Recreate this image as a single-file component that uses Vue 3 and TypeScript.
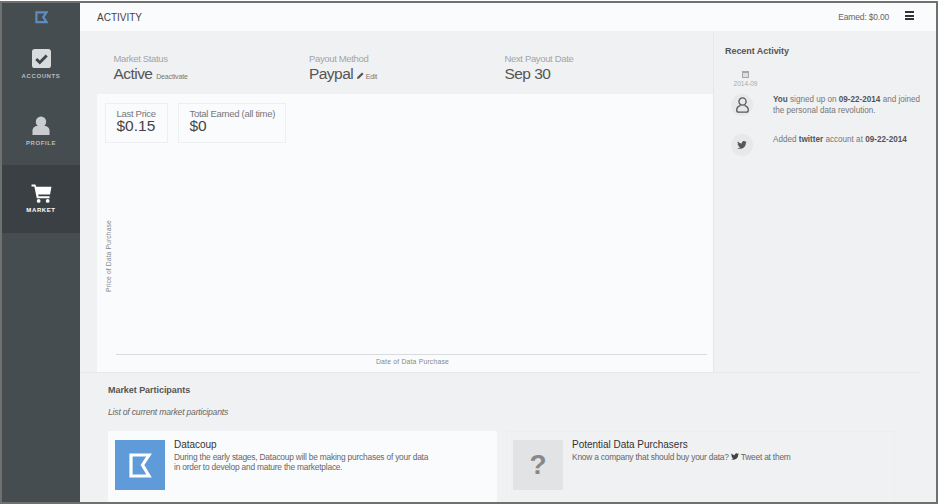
<template>
  <div class="frame">
    <aside class="sidebar">
      <div class="brand">
        <svg width="13" height="13" viewBox="0 0 14 14"><path d="M1.500 1.500h11l-3.600 5 3.600 5.500h-11z" fill="none" stroke="#5b8dc2" stroke-width="2.400" /></svg>
      </div>
      <a class="nav-item">
        <svg width="19" height="19" viewBox="0 0 20 20">
          <rect width="20" height="20" rx="3" fill="#d9dcdd" />
          <path d="M4.500 10.500l3.700 3.700 7.300-7.400" fill="none" stroke="#3f4649" stroke-width="3" />
        </svg>
        <span>ACCOUNTS</span>
      </a>
      <a class="nav-item">
        <svg width="18" height="19" viewBox="0 0 19 20" fill="#c9cdcf">
          <circle cx="9.500" cy="6" r="5.500" />
          <path d="M0.500 20v-4.500c0-3 2.500-5 5-5h8c2.500 0 5 2 5 5V20z" />
        </svg>
        <span>PROFILE</span>
      </a>
      <a class="nav-item active">
        <svg class="cart" width="21" height="19" viewBox="0 0 21 20" fill="#fff">
          <path d="M0 0.500h4l1 2.500h16l-1.500 8H7l.4 2H19v2H5.500L3 2.500H0z" />
          <circle cx="7.500" cy="17.800" r="2" />
          <circle cx="17" cy="17.800" r="2" />
        </svg>
        <span>MARKET</span>
      </a>
    </aside>

    <div class="page">
      <header class="topbar">
        <h1>ACTIVITY</h1>
        <div class="earned">Earned: $0.00</div>
        <div class="burger"><i></i><i></i><i></i></div>
      </header>

      <div class="columns">
        <main class="left">
          <section class="stats">
            <div class="stat" v-for="s in stats" :key="s.label">
              <div class="stat-label">{{ s.label }}</div>
              <div class="stat-value">
                {{ s.value }}
                <small v-if="s.note">
                  <svg v-if="s.pencil" width="7" height="7" viewBox="0 0 7 7"><path d="M0 7l.4-2L5 .4 6.600 2 2 6.600z" fill="#555" /></svg>
                  {{ s.note }}
                </small>
              </div>
            </div>
          </section>

          <section class="chart">
            <div class="tiles">
              <div class="tile">
                <div class="tile-label">Last Price</div>
                <div class="tile-value">$0.15</div>
              </div>
              <div class="tile wide">
                <div class="tile-label">Total Earned (all time)</div>
                <div class="tile-value">$0</div>
              </div>
            </div>
            <div class="plot">
              <div class="y-label">Price of Data Purchase</div>
              <div class="x-axis">
                <div class="axis-line"></div>
                <div class="x-label">Date of Data Purchase</div>
              </div>
            </div>
          </section>
        </main>

        <aside class="recent">
          <h2>Recent Activity</h2>
          <div class="month">
            <svg width="7" height="8" viewBox="0 0 7 8"><path d="M0 1h7v7H0z" fill="#a5a7a9" /><path d="M1 3h5v4H1z" fill="#dcdee0" /></svg>
            <span>2014-09</span>
          </div>
          <div class="event">
            <div class="bubble">
              <svg width="13" height="16" viewBox="0 0 13 16" fill="none" stroke="#55595c" stroke-width="1.300">
                <circle cx="6.500" cy="4.500" r="3.600" />
                <path d="M4.500 8.300C2 9.200.7 11 .7 13c0 1.300.8 2.200 2 2.200h7.600c1.200 0 2-.9 2-2.200 0-2-1.300-3.800-3.800-4.700" />
              </svg>
            </div>
            <p><b>You</b> signed up on <b>09-22-2014</b> and joined the personal data revolution.</p>
          </div>
          <div class="event">
            <div class="bubble">
              <svg width="10" height="8" viewBox="0 0 24 20"><path :d="twitter" fill="#55595c" /></svg>
            </div>
            <p>Added <b>twitter</b> account at <b>09-22-2014</b></p>
          </div>
        </aside>
      </div>

      <section class="market">
        <h2>Market Participants</h2>
        <p class="intro">List of current market participants</p>
        <div class="cards">
          <article class="card primary">
            <div class="thumb blue">
              <svg width="23" height="25" viewBox="0 0 23 25"><path d="M2 2h18l-6.500 10L20 23H2z" fill="none" stroke="#fff" stroke-width="3.200" /></svg>
            </div>
            <div>
              <h3>Datacoup</h3>
              <p>During the early stages, Datacoup will be making purchases of your data<br />in order to develop and mature the marketplace.</p>
            </div>
          </article>
          <article class="card">
            <div class="thumb grey">?</div>
            <div>
              <h3>Potential Data Purchasers</h3>
              <p>
                Know a company that should buy your data?
                <svg width="8" height="7" viewBox="0 0 24 20"><path :d="twitter" fill="#444" /></svg>
                Tweet at them
              </p>
            </div>
          </article>
        </div>
      </section>
    </div>
  </div>
</template>

<script setup lang="ts">
interface Stat {
  label: string
  value: string
  note?: string
  pencil?: boolean
}

const stats: Stat[] = [
  { label: 'Market Status', value: 'Active', note: 'Deactivate' },
  { label: 'Payout Method', value: 'Paypal', note: 'Edit', pencil: true },
  { label: 'Next Payout Date', value: 'Sep 30' },
]

const twitter =
  'M24 2.400a9.800 9.800 0 0 1-2.800.8A4.900 4.900 0 0 0 23.300.500a9.800 9.800 0 0 1-3.100 1.200 4.900 4.900 0 0 0-8.400 4.500A14 14 0 0 1 1.700 1a4.900 4.900 0 0 0 1.500 6.600 4.900 4.900 0 0 1-2.200-.6c0 2.400 1.700 4.400 3.900 4.900a4.900 4.900 0 0 1-2.200.1 4.900 4.900 0 0 0 4.600 3.400A9.900 9.900 0 0 1 0 17.400 14 14 0 0 0 7.500 19.600c9.100 0 14.300-7.700 14-14.600A10 10 0 0 0 24 2.400z'
</script>

<style>
html,
body {
  margin: 0;
  background: #fff;
}
</style>

<style scoped>
.frame {
  box-sizing: border-box;
  width: 938px;
  height: 503px;
  margin-top: 1px;
  border: 2px solid #6f7171;
  display: flex;
  overflow: hidden;
  font-family: "Liberation Sans", Arial, sans-serif;
  color: #555;
  background: #f0f1f3;
}
.sidebar {
  width: 78px;
  flex: none;
  background: #454d50;
}
.brand {
  height: 28px;
  display: flex;
  justify-content: center;
  padding-top: 8px;
  box-sizing: border-box;
}
.nav-item {
  height: 67px;
  display: flex;
  flex-direction: column;
  align-items: center;
  padding-top: 18px;
  box-sizing: border-box;
  gap: 5px;
  font-size: 6px;
  font-weight: 700;
  letter-spacing: 0.6px;
  color: #b9bdbf;
}
.nav-item.active {
  height: 68px;
  background: #3a4043;
  color: #fff;
}
.cart {
  margin-top: 1px;
  margin-bottom: -1px;
}
.page {
  flex: 1;
  min-width: 0;
  display: flex;
  flex-direction: column;
}
.topbar {
  height: 28px;
  flex: none;
  display: flex;
  align-items: center;
  padding: 0 22px 0 17px;
  background: #fafbfd;
}
.topbar h1 {
  margin: 0;
  flex: 1;
  font-size: 10px;
  font-weight: 400;
  color: #444;
}
.earned {
  font-size: 8.500px;
  letter-spacing: -0.2px;
  color: #666;
  margin-right: 16px;
}
.burger {
  display: flex;
  flex-direction: column;
  gap: 1.500px;
  margin-bottom: 3px;
}
.burger i {
  display: block;
  width: 9px;
  height: 2px;
  background: #333;
}
.columns {
  display: flex;
  height: 341px;
  flex: none;
  margin-right: 16px;
  border-bottom: 1px solid #e6e7e9;
}
.left {
  width: 634px;
  flex: none;
  display: flex;
  flex-direction: column;
  padding-left: 17px;
  box-sizing: border-box;
  border-right: 1px solid #e6e7e9;
}
.stats {
  height: 63px;
  flex: none;
  display: flex;
  padding: 22px 0 0 16.500px;
  box-sizing: border-box;
}
.stat {
  width: 195.500px;
}
.stat-label {
  font-size: 9.500px;
  line-height: 11px;
  letter-spacing: -0.35px;
  color: #a3a5a8;
}
.stat-value {
  font-size: 15.500px;
  line-height: 18px;
  margin-top: 1px;
  letter-spacing: -0.55px;
  color: #555;
}
.stat-value small {
  font-size: 7px;
  letter-spacing: -0.15px;
  color: #777;
}
.chart {
  flex: 1;
  background: #fafbfd;
  display: flex;
  flex-direction: column;
  padding: 9px 6px 0 8px;
}
.tiles {
  display: flex;
  gap: 10px;
}
.tile {
  box-sizing: border-box;
  height: 40px;
  width: 63px;
  border: 1px solid #eeeff1;
  padding: 4px 0 0 10.500px;
  color: #444;
}
.tile.wide {
  width: 108px;
}
.tile-label {
  font-size: 9.500px;
  line-height: 11px;
  letter-spacing: -0.3px;
  color: #777;
}
.tile-value {
  font-size: 15.500px;
  line-height: 14px;
}
.plot {
  flex: 1;
  display: flex;
  min-height: 0;
}
.y-label {
  writing-mode: vertical-rl;
  transform: rotate(180deg);
  align-self: flex-end;
  font-size: 6.800px;
  color: #888;
  width: 11px;
  margin-bottom: 80px;
  letter-spacing: 0.1px;
}
.x-axis {
  flex: 1;
  align-self: flex-end;
}
.axis-line {
  height: 1px;
  background: #d9dbdd;
}
.x-label {
  height: 17px;
  padding: 3px 0 0 2px;
  box-sizing: border-box;
  text-align: center;
  font-size: 6.800px;
  letter-spacing: 0.2px;
  color: #888;
}
.recent {
  flex: 1;
  padding: 15px 0 0 11px;
}
h2 {
  margin: 0;
  font-size: 9px;
  line-height: 10px;
  font-weight: 700;
  letter-spacing: -0.05px;
  color: #555;
}
.month {
  width: 40px;
  margin: 14px 0 0 0.500px;
  display: flex;
  flex-direction: column;
  align-items: center;
  gap: 2px;
  font-size: 6.500px;
  line-height: 8px;
  color: #aaa;
}
.month svg {
  display: block;
}
.event {
  display: flex;
  gap: 20px;
  min-height: 34px;
  margin-top: 6px;
}
.bubble {
  width: 22px;
  height: 22px;
  border-radius: 50%;
  background: #e7e8ea;
  margin-left: 6px;
  flex: none;
  display: flex;
  align-items: center;
  justify-content: center;
}
.event p {
  margin: 0;
  font-size: 8.150px;
  line-height: 11px;
  color: #777;
  width: 160px;
}
.event b {
  color: #555;
}
.market {
  padding: 12px 0 0 28px;
}
.intro {
  margin: 12px 0 0;
  font-size: 8.600px;
  line-height: 10px;
  font-style: italic;
  letter-spacing: -0.2px;
  color: #666;
}
.cards {
  display: flex;
  gap: 9px;
  margin-top: 14px;
}
.card {
  box-sizing: border-box;
  width: 389px;
  height: 90px;
  padding: 8px 6px;
  display: flex;
  gap: 9px;
  border: 1px solid #edeef0;
}
.card.primary {
  background: #fafbfd;
  border-color: #fafbfd;
}
.card h3 {
  margin: 0;
  font-size: 10px;
  font-weight: 400;
  line-height: 10px;
  letter-spacing: -0.02px;
  color: #333;
}
.card p {
  margin: 2px 0 0;
  font-size: 8.400px;
  line-height: 10px;
  letter-spacing: -0.21px;
  color: #666;
}
.thumb {
  width: 50px;
  height: 50px;
  flex: none;
  display: flex;
  align-items: center;
  justify-content: center;
}
.thumb.blue {
  background: #5f9bd8;
}
.thumb.grey {
  background: #e2e3e5;
  color: #888;
  font-size: 28px;
  font-weight: 700;
}
</style>
